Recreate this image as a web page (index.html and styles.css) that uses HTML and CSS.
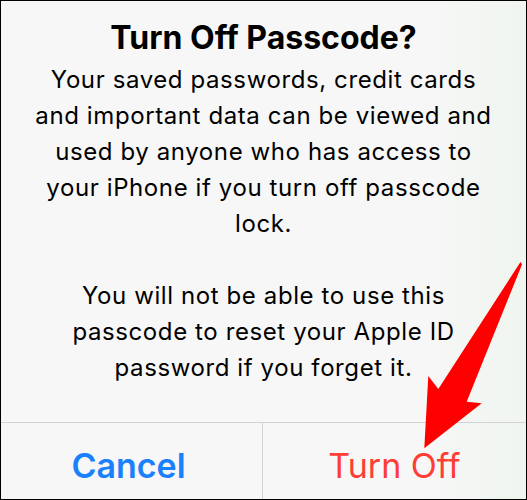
FILE: index.html
```html
<!DOCTYPE html>
<html lang="en">
<head>
<meta charset="utf-8">
<title>Turn Off Passcode?</title>
<link rel="stylesheet" href="styles.css">
</head>
<body>
<div class="alert">
  <div class="content">
    <h1 class="title">Turn Off Passcode?</h1>
    <p class="message">Your saved passwords, credit cards and important data can be viewed and used by anyone who has access to your iPhone if you turn off passcode lock.</p>
    <p class="message gap">You will not be able to use this passcode to reset your Apple ID password if you forget it.</p>
  </div>
  <div class="actions">
    <div class="btn cancel">Cancel</div>
    <div class="btn destructive">Turn Off</div>
  </div>
</div>
<svg class="arrow" width="527" height="500" viewBox="0 0 527 500" aria-hidden="true">
  <polygon points="520.5,262 522,264.5 466.7,401.7 481.7,403.3 424.3,448.3 428.3,376 438.3,389" fill="#ff0000"/>
</svg>
</body>
</html>
```
FILE: styles.css
```css
html, body {
  margin: 0;
  padding: 0;
}
body {
  width: 527px;
  height: 500px;
  box-sizing: border-box;
  border: 1px solid #000;
  background: linear-gradient(90deg, #f7f7f7 0%, #f7f7f7 80%, #eff5ef 100%);
  font-family: Inter, "Liberation Sans", sans-serif;
  color: #000;
  overflow: hidden;
}
.alert {
  height: 100%;
  display: flex;
  flex-direction: column;
}
.content {
  flex: 1;
  padding: 17px 30px 0;
  text-align: center;
}
.title {
  margin: 0;
  font-size: 32px;
  line-height: 40px;
  font-weight: 700;
  letter-spacing: 0px;
}
.message {
  margin: 4px 0 0;
  font-size: 24px;
  line-height: 36px;
  font-weight: 400;
  letter-spacing: 0.6px;
}
.message.gap {
  margin-top: 36px;
}
.actions {
  height: 76px;
  border-top: 1px solid #d2d2d2;
  display: grid;
  grid-template-columns: 262px 1fr;
}
.btn {
  display: flex;
  justify-content: center;
  align-items: center;
  padding-top: 10px;
  font-size: 34px;
  line-height: 40px;
}
.cancel {
  color: #1a80fb;
  font-weight: 600;
  padding-right: 6px;
  border-right: 1px solid #d2d2d2;
}
.destructive {
  color: #fe3d35;
  font-weight: 400;
}
.arrow {
  position: absolute;
  top: 0;
  left: 0;
  pointer-events: none;
}
```
